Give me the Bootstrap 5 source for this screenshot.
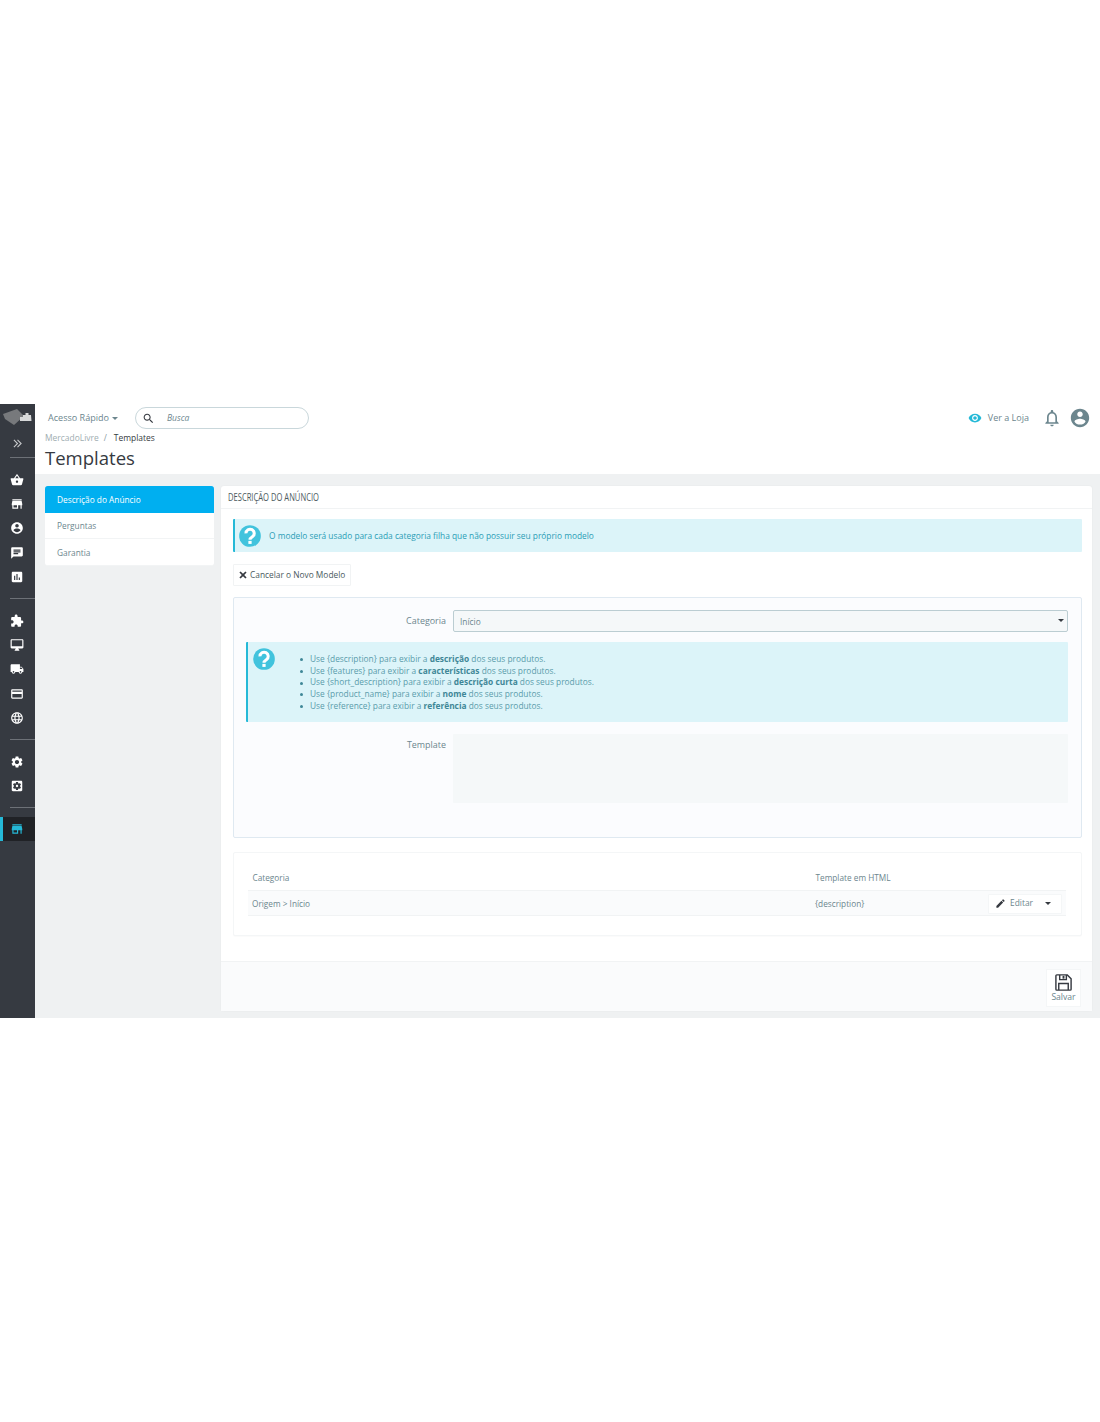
<!DOCTYPE html>
<html lang="pt-BR">
<head>
<meta charset="utf-8">
<title>Templates</title>
<link href="https://cdn.jsdelivr.net/npm/bootstrap@5.3.0/dist/css/bootstrap.min.css" rel="stylesheet">
<style>
html,body{background:#fff}
body{font-family:"Open Sans","Noto Sans",sans-serif;font-size:8.35px;line-height:12px;color:#6c868e;padding-top:404px;min-height:1422px}
.app-shell{height:614px;background:#eff1f2;overflow:hidden}
.side-rail{width:35px;background:#363a41;flex:none}
.rail-logo{height:26px;padding:5px 0 0 3px}
.rail-logo svg{display:block}
.rail-toggle{height:27px;color:#bebebe;font-size:12px;line-height:25px;text-align:center;padding-right:1px}
.rail-rule{height:1px;background:#6d7177;margin-left:10px;margin-bottom:9.5px}
.rail-item{height:24.3px;display:flex;align-items:center;justify-content:center;fill:#fff;padding-right:1px}
.rail-gap{height:9px}
.rail-on{background:#202226;border-left:3px solid #25b9d7;fill:#25b9d7;padding-right:5px;margin-top:-1px}
.rail-item svg{width:14px;height:14px}
.main-col{min-width:0;flex:1}
.top-head{background:#fff;height:70px;padding:0 12px 0 10px}
.quick-link{color:#6c868e;font-size:9.05px;margin-left:3px;width:87px}
.caret-s{display:inline-block;border-left:3px solid transparent;border-right:3px solid transparent;border-top:3px solid currentColor;vertical-align:middle;margin-left:3px}
.search-pill{width:174px;height:22px;border:1px solid #c9d7db;border-radius:11px;padding-left:6px;font-style:italic;font-size:8.5px;color:#6c868e}
.search-pill svg{width:13px;height:13px;fill:#363a41;margin-right:12px}
.top-row{height:28px}
.shop-link{color:#6c868e;font-size:9px;margin-right:13px}
.shop-link svg{width:14px;height:14px;fill:#25b9d7;margin-right:6px}
.bell-i{width:20px;height:20px;fill:#6c868e;margin-right:7px}
.user-i{width:22px;height:22px;fill:#6c868e;margin-right:-3px}
.crumbs{font-size:8.45px;line-height:12px;margin-bottom:0;--bs-breadcrumb-divider-color:#6c868e}
.crumbs .breadcrumb-item{color:#363a41}
.crumbs .breadcrumb-item+.breadcrumb-item{padding-left:5px}
.crumbs .breadcrumb-item+.breadcrumb-item::before{padding-right:7px;color:#8a9ba1}
.crumbs a{color:#a0adb1;text-decoration:none}
.page-title{font-family:"Open Sans",sans-serif;font-size:18.55px;line-height:26px;color:#363a41;font-weight:400;margin:1px 0 0}
.work-area{padding:12px 8px 0 10px;gap:7px}
.left-menu{width:169px;flex:none;--bs-list-group-border-color:#f2f4f5;border-radius:3px;align-self:flex-start}
.left-menu .list-group-item{font-size:8.3px;line-height:12px;padding:7.5px 11px 7px 12px;height:26.6px;color:#6c868e;border-left:0;border-right:0}
.left-menu .list-group-item.active{background:#00aff0;border-color:#00aff0;color:#fff;padding-top:7px}
.main-panel{flex:1;min-width:0;height:525px;background:#fff;border:0;border-radius:3px;box-shadow:0 0 2px rgba(0,0,0,.05)}
.panel-head{height:23px;padding:5px 7px 0;border-bottom:1px solid #f1f3f4;font-family:"Open Sans",sans-serif;font-size:10.6px;line-height:13px;color:#4d5b60}
.head-squeeze{display:inline-block;transform:scaleX(.717);transform-origin:left center;white-space:nowrap}
.panel-body{padding:10px 10px 0 12px}
.note-box{background:#dcf4f9;border:0;border-left:2px solid #25b9d7;border-radius:1px;color:#2a9db6;margin:0;font-size:8.35px;padding:0}
.note-top{height:33px;padding-left:2px;padding-top:1px}
.note-top svg,.note-big svg{flex:none}
.note-top svg{width:26px;height:26px;margin-right:6px}
.cancel-btn{--bs-btn-padding-x:5px;--bs-btn-padding-y:4px;--bs-btn-font-size:8.35px;--bs-btn-line-height:12px;--bs-btn-color:#4a5a60;--bs-btn-border-color:#f1f3f4;--bs-btn-border-radius:1px;--bs-btn-bg:#fff;margin:12px 0 11px;height:22px;display:flex;align-items:center;width:118px;white-space:nowrap}
.cancel-btn svg{width:8px;height:8px;flex:none;fill:#363a41;margin-right:3px}
.form-box{height:241px;background:#fbfcfe;border:1px solid #dfe9f1;border-radius:2px;padding:12px 13px 0 12px}
.form-lbl{width:207px;text-align:right;padding-right:7px;flex:none;color:#6c868e;font-size:8.95px}
.sel-box{height:22px;background-color:#f5f8f9;border:1px solid #bbcdd2;border-radius:2px;padding:0 6px;font-size:8.35px;line-height:21px;color:#6c868e;position:relative;flex:1}
.sel-box::after{content:"";position:absolute;right:3px;top:8px;border-left:3.5px solid transparent;border-right:3.5px solid transparent;border-top:3.5px solid #363a41}
.note-big{margin:10px 0 12px;height:80px;padding:4px 0 0 3px;color:#5a9cab;font-size:8.36px;line-height:11.8px}
.note-big svg{width:26px;height:26px}
.note-big ul{margin:7px 0 0;padding-left:33px;list-style:none}
.note-big li::before{content:"";display:inline-block;width:3px;height:3px;border-radius:50%;background:#3f8797;margin-left:-10px;margin-right:7px;vertical-align:middle}
.note-big b{color:#3f8797;font-weight:700}
.tpl-area{height:69px;background:#f5f8f9;flex:1;border-radius:1px}
.tpl-lbl{padding-top:5px}
.grid-box{height:84px;margin-top:14px;background:#fff;border:1px solid #f4f6f7;border-radius:2px;padding:15px 15px 0 14px;box-shadow:0 1px 1px rgba(0,0,0,.02)}
.data-tbl{margin:0;--bs-table-bg:transparent;--bs-table-color:#6c868e;--bs-table-border-color:#f1f3f4;font-size:8.25px;line-height:12px;table-layout:fixed;width:100%}
.data-tbl th{font-weight:400;height:23px;padding:0 4px 6px 4.5px;vertical-align:bottom}
.data-tbl td{background:#fafbfc;height:25px;padding:1px 4px 0;vertical-align:middle}
.col-one{width:563px}
.col-two{width:173px}
.edit-btn{--bs-btn-padding-x:6px;--bs-btn-padding-y:0;--bs-btn-font-size:8.4px;--bs-btn-color:#6c868e;--bs-btn-border-color:#f4f6f7;--bs-btn-bg:#fff;--bs-btn-border-radius:1px;width:74px;height:20px;display:flex;align-items:center}
.edit-btn svg{width:11px;height:11px;flex:none;fill:#363a41;margin-right:4px}
.edit-btn .caret-s{border-left-width:3.5px;border-right-width:3.5px;border-top-width:3.5px;color:#363a41}
.panel-foot{height:51px;margin-top:25px;background:#fafbfc;border-top:1px solid #f1f3f4;padding:7px 11px 0}
.save-btn{width:35px;height:38px;background:#fff;border:1px solid #f4f6f7;color:#6c868e;font-size:8.6px;line-height:10px;display:flex;flex-direction:column;align-items:center;padding:3px 0 0}
.save-btn svg{width:19px;height:19px;flex:none}
</style>
</head>
<body>
<div class="app-shell d-flex">
  <nav class="side-rail">
    <div class="rail-logo"><svg width="30" height="17" viewBox="0 0 30 17"><polygon points="0,5 14,0 21,7 11,16 2,10" fill="#77797c"/><path d="M17 8h3V6h2.500V4h3v2H28l.5 6H17z" fill="#d7d8d9"/></svg></div>
    <div class="rail-toggle"><svg width="9" height="9" viewBox="0 0 10 10" fill="none" stroke="#c8cacc" stroke-width="1.2"><path d="M1 1l4 4-4 4M5 1l4 4-4 4"/></svg></div>
    <div class="rail-rule"></div>
    <div class="rail-item"><svg viewBox="0 0 24 24"><path d="M17.21 9l-4.38-6.56c-.19-.28-.51-.42-.83-.42-.32 0-.64.14-.83.43L6.79 9H2c-.55 0-1 .45-1 1 0 .09.01.18.04.27l2.54 9.27c.23.84 1 1.46 1.92 1.46h13c.92 0 1.69-.62 1.93-1.46l2.54-9.27L23 10c0-.55-.45-1-1-1h-4.79zM9 9l3-4.4L15 9H9zm3 8c-1.1 0-2-.9-2-2s.9-2 2-2 2 .9 2 2-.9 2-2 2z"/></svg></div>
    <div class="rail-item"><svg viewBox="0 0 24 24"><path d="M20 4H4v2h16V4zm1 10v-2l-1-5H4l-1 5v2h1v6h10v-6h4v6h2v-6h1zm-9 4H6v-4h6v4z"/></svg></div>
    <div class="rail-item"><svg viewBox="0 0 24 24"><path d="M12 2C6.48 2 2 6.48 2 12s4.48 10 10 10 10-4.48 10-10S17.52 2 12 2zm0 3c1.66 0 3 1.34 3 3s-1.34 3-3 3-3-1.34-3-3 1.34-3 3-3zm0 14.2c-2.5 0-4.71-1.28-6-3.22.03-1.99 4-3.08 6-3.08 1.99 0 5.97 1.09 6 3.08-1.29 1.94-3.5 3.22-6 3.22z"/></svg></div>
    <div class="rail-item"><svg viewBox="0 0 24 24"><path d="M20 2H4c-1.1 0-1.99.9-1.99 2L2 22l4-4h14c1.1 0 2-.9 2-2V4c0-1.1-.9-2-2-2zM6 9h12v2H6V9zm8 5H6v-2h8v2zm4-6H6V6h12v2z"/></svg></div>
    <div class="rail-item"><svg viewBox="0 0 24 24"><path d="M19 3H5c-1.1 0-2 .9-2 2v14c0 1.1.9 2 2 2h14c1.1 0 2-.9 2-2V5c0-1.1-.9-2-2-2zM9 17H7v-7h2v7zm4 0h-2V7h2v10zm4 0h-2v-4h2v4z"/></svg></div>
    <div class="rail-gap"></div><div class="rail-rule"></div>
    <div class="rail-item"><svg viewBox="0 0 24 24"><path d="M20.5 11H19V7c0-1.1-.9-2-2-2h-4V3.5C13 2.12 11.88 1 10.5 1S8 2.12 8 3.5V5H4c-1.1 0-1.99.9-1.99 2v3.8H3.5c1.49 0 2.7 1.21 2.7 2.7s-1.21 2.7-2.7 2.7H2V20c0 1.1.9 2 2 2h3.8v-1.5c0-1.49 1.21-2.7 2.7-2.7 1.49 0 2.7 1.21 2.7 2.7V22H17c1.1 0 2-.9 2-2v-4h1.5c1.38 0 2.5-1.12 2.5-2.5S21.88 11 20.5 11z"/></svg></div>
    <div class="rail-item"><svg viewBox="0 0 24 24"><path d="M21 2H3c-1.1 0-2 .9-2 2v12c0 1.1.9 2 2 2h7l-2 3v1h8v-1l-2-3h7c1.1 0 2-.9 2-2V4c0-1.1-.9-2-2-2zm0 12H3V4h18v10z"/></svg></div>
    <div class="rail-item"><svg viewBox="0 0 24 24"><path d="M20 8h-3V4H3c-1.1 0-2 .9-2 2v11h2c0 1.66 1.34 3 3 3s3-1.34 3-3h6c0 1.66 1.34 3 3 3s3-1.34 3-3h2v-5l-3-4zM6 18.5c-.83 0-1.5-.67-1.5-1.5s.67-1.5 1.5-1.5 1.5.67 1.5 1.5-.67 1.5-1.5 1.5zm13.5-9l1.96 2.5H17V9.5h2.5zm-1.5 9c-.83 0-1.5-.67-1.5-1.5s.67-1.5 1.5-1.5 1.5.67 1.5 1.5-.67 1.5-1.5 1.5z"/></svg></div>
    <div class="rail-item"><svg viewBox="0 0 24 24"><path d="M20 4H4c-1.11 0-1.99.89-1.99 2L2 18c0 1.11.89 2 2 2h16c1.11 0 2-.89 2-2V6c0-1.11-.89-2-2-2zm0 14H4v-6h16v6zm0-10H4V6h16v2z"/></svg></div>
    <div class="rail-item"><svg viewBox="0 0 24 24"><path d="M11.99 2C6.47 2 2 6.48 2 12s4.47 10 9.99 10C17.52 22 22 17.52 22 12S17.52 2 11.99 2zm6.93 6h-2.95c-.32-1.25-.78-2.45-1.38-3.56 1.84.63 3.37 1.91 4.33 3.56zM12 4.04c.83 1.2 1.48 2.53 1.91 3.96h-3.82c.43-1.43 1.08-2.76 1.91-3.96zM4.26 14C4.1 13.36 4 12.69 4 12s.1-1.36.26-2h3.38c-.08.66-.14 1.32-.14 2 0 .68.06 1.34.14 2H4.26zm.82 2h2.95c.32 1.25.78 2.45 1.38 3.56-1.84-.63-3.37-1.9-4.33-3.56zm2.95-8H5.08c.96-1.66 2.49-2.93 4.33-3.56C8.81 5.55 8.35 6.75 8.03 8zM12 19.96c-.83-1.2-1.48-2.53-1.91-3.96h3.82c-.43 1.43-1.08 2.76-1.91 3.96zM14.34 14H9.66c-.09-.66-.16-1.32-.16-2 0-.68.07-1.35.16-2h4.68c.09.65.16 1.32.16 2 0 .68-.07 1.34-.16 2zm.25 5.56c.6-1.11 1.06-2.31 1.38-3.56h2.95c-.96 1.65-2.49 2.93-4.33 3.56zM16.36 14c.08-.66.14-1.32.14-2 0-.68-.06-1.34-.14-2h3.38c.16.64.26 1.31.26 2s-.1 1.36-.26 2h-3.38z"/></svg></div>
    <div class="rail-gap"></div><div class="rail-rule"></div>
    <div class="rail-item"><svg viewBox="0 0 24 24"><path d="M19.14 12.94c.04-.3.06-.61.06-.94 0-.32-.02-.64-.07-.94l2.03-1.58c.18-.14.23-.41.12-.61l-1.92-3.32c-.12-.22-.37-.29-.59-.22l-2.39.96c-.5-.38-1.03-.7-1.62-.94l-.36-2.54c-.04-.24-.24-.41-.48-.41h-3.84c-.24 0-.43.17-.47.41l-.36 2.54c-.59.24-1.13.57-1.62.94l-2.39-.96c-.22-.08-.47 0-.59.22L2.74 8.87c-.12.21-.08.47.12.61l2.03 1.58c-.05.3-.09.63-.09.94s.02.64.07.94l-2.03 1.58c-.18.14-.23.41-.12.61l1.92 3.32c.12.22.37.29.59.22l2.39-.96c.5.38 1.03.7 1.62.94l.36 2.54c.05.24.24.41.48.41h3.84c.24 0 .44-.17.47-.41l.36-2.54c.59-.24 1.13-.56 1.62-.94l2.39.96c.22.08.47 0 .59-.22l1.92-3.32c.12-.22.07-.47-.12-.61l-2.01-1.58zM12 15.6c-1.98 0-3.6-1.62-3.6-3.6s1.62-3.6 3.6-3.6 3.6 1.62 3.6 3.6-1.62 3.6-3.6 3.6z"/></svg></div>
    <div class="rail-item"><svg viewBox="0 0 24 24"><path d="M12 10c-1.1 0-2 .9-2 2s.9 2 2 2 2-.9 2-2-.9-2-2-2zm7-7H5c-1.11 0-2 .9-2 2v14c0 1.1.89 2 2 2h14c1.11 0 2-.9 2-2V5c0-1.1-.89-2-2-2zm-1.75 9c0 .23-.02.46-.05.68l1.48 1.16c.13.11.17.3.08.45l-1.4 2.42c-.09.15-.27.21-.43.15l-1.74-.7c-.36.28-.76.51-1.18.69l-.26 1.85c-.03.17-.18.3-.35.3h-2.8c-.17 0-.32-.13-.35-.29l-.26-1.85c-.43-.18-.82-.41-1.18-.69l-1.74.7c-.16.06-.34 0-.43-.15l-1.4-2.42c-.09-.15-.05-.34.08-.45l1.48-1.16c-.03-.23-.05-.46-.05-.69 0-.23.02-.46.05-.68l-1.48-1.16c-.13-.11-.17-.3-.08-.45l1.4-2.42c.09-.15.27-.21.43-.15l1.74.7c.36-.28.76-.51 1.18-.69l.26-1.85c.03-.17.18-.3.35-.3h2.8c.17 0 .32.13.35.29l.26 1.85c.43.18.82.41 1.18.69l1.74-.7c.16-.06.34 0 .43.15l1.4 2.42c.09.15.05.34-.08.45l-1.48 1.16c.03.23.05.46.05.69z"/></svg></div>
    <div class="rail-gap"></div><div class="rail-rule"></div>
    <div class="rail-item rail-on"><svg viewBox="0 0 24 24"><path d="M20 4H4v2h16V4zm1 10v-2l-1-5H4l-1 5v2h1v6h10v-6h4v6h2v-6h1zm-9 4H6v-4h6v4z"/></svg></div>
  </nav>
  <div class="main-col d-flex flex-column">
    <header class="top-head">
      <div class="top-row d-flex align-items-center">
        <a class="quick-link text-decoration-none" href="#">Acesso Rápido<span class="caret-s"></span></a>
        <div class="search-pill d-flex align-items-center"><svg viewBox="0 0 24 24"><path d="M15.5 14h-.79l-.28-.27C15.41 12.59 16 11.11 16 9.5 16 5.91 13.09 3 9.5 3S3 5.91 3 9.5 5.91 16 9.5 16c1.61 0 3.09-.59 4.23-1.57l.27.28v.79l5 4.99L20.49 19l-4.99-5zm-6 0C7.01 14 5 11.99 5 9.5S7.01 5 9.5 5 14 7.01 14 9.5 11.99 14 9.5 14z"/></svg>Busca</div>
        <div class="ms-auto d-flex align-items-center">
          <a class="shop-link d-flex align-items-center text-decoration-none" href="#"><svg viewBox="0 0 24 24"><path d="M12 4.5C7 4.5 2.73 7.61 1 12c1.73 4.39 6 7.5 11 7.5s9.27-3.11 11-7.5c-1.73-4.39-6-7.5-11-7.5zM12 17c-2.76 0-5-2.24-5-5s2.24-5 5-5 5 2.24 5 5-2.24 5-5 5zm0-8c-1.66 0-3 1.34-3 3s1.34 3 3 3 3-1.34 3-3-1.34-3-3-3z"/></svg>Ver a Loja</a>
          <svg class="bell-i" viewBox="0 0 24 24"><path d="M12 22c1.1 0 2-.9 2-2h-4c0 1.1.89 2 2 2zm6-6v-5c0-3.07-1.64-5.64-4.5-6.32V4c0-.83-.67-1.5-1.5-1.5s-1.5.67-1.5 1.5v.68C7.63 5.36 6 7.92 6 11v5l-2 2v1h16v-1l-2-2zm-2 1H8v-6c0-2.48 1.51-4.5 4-4.5s4 2.02 4 4.5v6z"/></svg>
          <svg class="user-i" viewBox="0 0 24 24"><path d="M12 2C6.48 2 2 6.48 2 12s4.48 10 10 10 10-4.48 10-10S17.52 2 12 2zm0 3c1.66 0 3 1.34 3 3s-1.34 3-3 3-3-1.34-3-3 1.34-3 3-3zm0 14.2c-2.5 0-4.71-1.28-6-3.22.03-1.99 4-3.08 6-3.08 1.99 0 5.97 1.09 6 3.08-1.29 1.94-3.5 3.22-6 3.22z"/></svg>
        </div>
      </div>
      <ol class="breadcrumb crumbs"><li class="breadcrumb-item"><a href="#">MercadoLivre</a></li><li class="breadcrumb-item active">Templates</li></ol>
      <h1 class="page-title">Templates</h1>
    </header>
    <div class="work-area d-flex">
      <div class="list-group left-menu">
        <a class="list-group-item list-group-item-action active" href="#">Descrição do Anúncio</a>
        <a class="list-group-item list-group-item-action" href="#">Perguntas</a>
        <a class="list-group-item list-group-item-action" href="#">Garantia</a>
      </div>
      <section class="card main-panel">
        <div class="panel-head"><span class="head-squeeze">DESCRIÇÃO DO ANÚNCIO</span></div>
        <div class="panel-body">
          <div class="alert note-box note-top d-flex align-items-center"><svg viewBox="0 0 24 24"><circle cx="12" cy="12" r="10" fill="#41c3dd"/><path d="M8.300 9.600a3.800 3.800 0 1 1 5.900 3.100c-1.400.9-2.200 1.400-2.200 2.700" fill="none" stroke="#fff" stroke-width="2.800"/><rect x="10.500" y="16.500" width="3" height="2.800" fill="#fff"/></svg>O modelo será usado para cada categoria filha que não possuir seu próprio modelo</div>
          <a class="btn cancel-btn" href="#"><svg viewBox="0 0 10 10"><path d="M2 .5 5 3.500 8 .5 9.500 2 6.500 5 9.500 8 8 9.500 5 6.500 2 9.500 .5 8 3.500 5 .5 2z"/></svg>Cancelar o Novo Modelo</a>
          <div class="form-box">
            <div class="d-flex align-items-center">
              <label class="form-lbl">Categoria</label>
              <div class="sel-box">Início</div>
            </div>
            <div class="alert note-box note-big d-flex">
              <svg viewBox="0 0 24 24"><circle cx="12" cy="12" r="10" fill="#41c3dd"/><path d="M8.300 9.600a3.800 3.800 0 1 1 5.900 3.100c-1.400.9-2.200 1.400-2.200 2.700" fill="none" stroke="#fff" stroke-width="2.800"/><rect x="10.500" y="16.500" width="3" height="2.800" fill="#fff"/></svg>
              <ul>
                <li>Use {description} para exibir a <b>descrição</b> dos seus produtos.</li>
                <li>Use {features} para exibir a <b>características</b> dos seus produtos.</li>
                <li>Use {short_description} para exibir a <b>descrição curta</b> dos seus produtos.</li>
                <li>Use {product_name} para exibir a <b>nome</b> dos seus produtos.</li>
                <li>Use {reference} para exibir a <b>referência</b> dos seus produtos.</li>
              </ul>
            </div>
            <div class="d-flex align-items-start">
              <label class="form-lbl tpl-lbl">Template</label>
              <div class="tpl-area"></div>
            </div>
          </div>
          <div class="grid-box">
            <table class="table data-tbl">
              <thead><tr><th class="col-one">Categoria</th><th class="col-two">Template em HTML</th><th></th></tr></thead>
              <tbody><tr><td>Origem &gt; Início</td><td>{description}</td><td>
                <a class="btn edit-btn" href="#"><svg viewBox="0 0 24 24"><path d="M3 17.25V21h3.750L17.810 9.940l-3.750-3.750L3 17.250zM20.710 7.040c.390-.390.390-1.020 0-1.410l-2.340-2.340c-.390-.390-1.020-.390-1.410 0l-1.830 1.830 3.750 3.750 1.830-1.830z"/></svg>Editar<span class="caret-s ms-auto me-1"></span></a>
              </td></tr></tbody>
            </table>
          </div>
        </div>
        <div class="panel-foot d-flex justify-content-end">
          <a class="save-btn text-decoration-none" href="#"><svg viewBox="0 0 20 20" fill="none" stroke="#363a41" stroke-width="1.500"><path d="M2 3a1 1 0 0 1 1-1h11l4 4v11a1 1 0 0 1-1 1H3a1 1 0 0 1-1-1z"/><path d="M6 2v5h7V2M5 18v-7h10v7"/><path d="M10 3v3" stroke-width="2"/></svg>Salvar</a>
        </div>
      </section>
    </div>
  </div>
</div>
<script src="https://cdn.jsdelivr.net/npm/bootstrap@5.3.0/dist/js/bootstrap.bundle.min.js"></script>
</body>
</html>
